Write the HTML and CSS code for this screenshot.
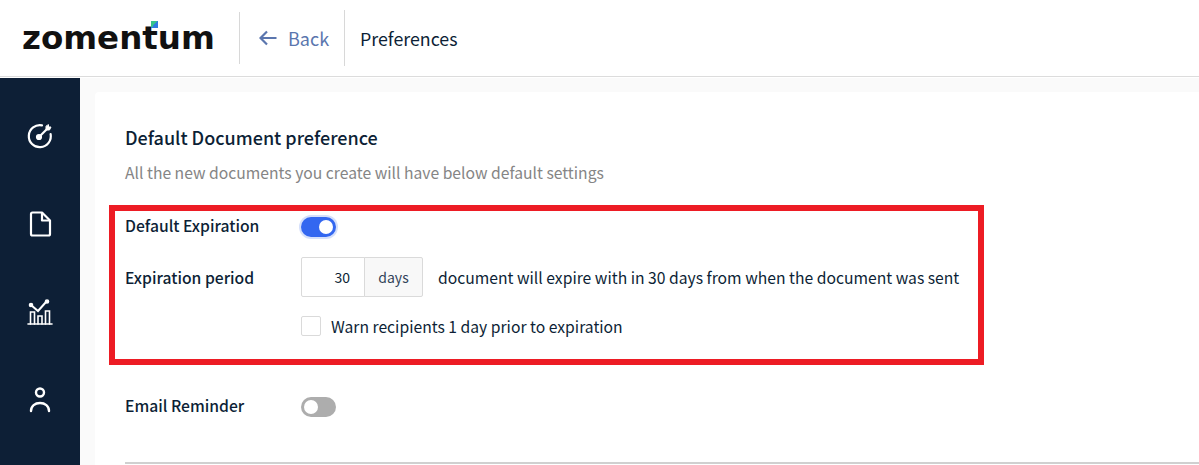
FILE: index.html
```html
<!DOCTYPE html>
<html lang="en">
<head>
    <meta charset="UTF-8">
    <meta name="viewport" content="width=device-width, initial-scale=1.0">
    <title>Preferences</title>
    <link rel="stylesheet" href="styles.css">
</head>
<body>
    <div class="header">
        <div class="logo">zomen<span class="logo-t">t<i class="logo-mark"></i></span>um</div>
        <div class="back">
            <svg width="18" height="16" viewBox="0 0 18 16"><path d="M8 1.500 1.500 8 8 14.500M2 8h15.500" fill="none" stroke="#5b76ae" stroke-width="2.200"/></svg>
            <span>Back</span>
        </div>
        <div class="page-title">Preferences</div>
    </div>

    <div class="main">
        <div class="sidebar">
            <svg class="nav-icon" viewBox="0 0 28 28" fill="none" stroke="#fff" stroke-width="2.200" stroke-linecap="round" stroke-linejoin="round">
                <path d="M16 3.400A11 11 0 1 0 24.600 12"/>
                <path d="M13 15 21 7"/>
                <circle cx="13" cy="15" r="2" fill="#fff"/>
                <path d="M20 4.500v3.500h3.500l1.500-3h-2.500v-2z" fill="#fff" stroke-width="1"/>
            </svg>
            <svg class="nav-icon" viewBox="0 0 28 28" fill="none" stroke="#fff" stroke-width="2.200" stroke-linejoin="round">
                <path d="M6.500 2.500H16L24 10.500V24a1.500 1.500 0 0 1-1.500 1.500h-16A1.500 1.500 0 0 1 5 24V4a1.500 1.500 0 0 1 1.500-1.500z"/>
                <path d="M16 2.500v8h8"/>
            </svg>
            <svg class="nav-icon" viewBox="0 0 28 28" fill="none" stroke="#fff" stroke-width="1.600" stroke-linecap="round">
                <path d="M2 26h24"/>
                <path d="M4.500 26V14h4v12M12 26v-8h4v8M19.500 26V13h4v13"/>
                <path d="M5 7l7 6 8-9" stroke-width="2"/>
                <circle cx="5" cy="7" r="1.500" fill="#fff"/>
                <circle cx="21" cy="3.500" r="1.500" fill="#fff"/>
            </svg>
            <svg class="nav-icon" viewBox="0 0 28 28" fill="none" stroke="#fff" stroke-width="2.400" stroke-linecap="round">
                <circle cx="14" cy="6.500" r="4"/>
                <path d="M5 25c0-5 4-8 9-8s9 3 9 8"/>
            </svg>
        </div>

        <div class="content">
            <div class="card">
                <h2 class="title">Default Document preference</h2>
                <p class="subtitle">All the new documents you create will have below default settings</p>

                <div class="row row-expiration">
                    <div class="label">Default Expiration</div>
                    <div class="switch switch-on"><span class="knob"></span></div>
                </div>

                <div class="row row-period">
                    <div class="label">Expiration period</div>
                    <div class="period-input">
                        <div class="period-value">30</div>
                        <div class="period-unit">days</div>
                    </div>
                    <div class="period-note">document will expire with in 30 days from when the document was sent</div>
                </div>

                <div class="row row-warn">
                    <div class="label"></div>
                    <div class="checkbox"></div>
                    <div class="warn-text">Warn recipients 1 day prior to expiration</div>
                </div>

                <div class="row row-reminder">
                    <div class="label">Email Reminder</div>
                    <div class="switch"><span class="knob"></span></div>
                </div>

                <div class="divider"></div>

                <div class="highlight"></div>
            </div>
        </div>
    </div>
</body>
</html>
```

FILE: styles.css
```css
* {
    box-sizing: border-box;
}

html, body {
    height: 100%;
}

body {
    margin: 0;
    font-family: "Noto Sans CJK SC", "Noto Sans", sans-serif;
    color: #0d1f36;
    background-color: white;
    overflow: hidden;
}

.header {
    display: flex;
    align-items: center;
    height: 77px;
    border-bottom: 1px solid #dcdcdc;
    background-color: white;
}

.logo {
    width: 239px;
    padding-left: 22px;
    font-family: "DejaVu Sans", sans-serif;
    font-size: 32.500px;
    font-weight: 700;
    color: #111;
    line-height: 1;
}

.logo-t {
    position: relative;
}

.logo-mark {
    position: absolute;
    top: 2px;
    right: 0;
    width: 7px;
    height: 7px;
    background: linear-gradient(135deg, #35c48b 50%, #2f7ce0 50%);
}

.back {
    display: flex;
    align-items: center;
    gap: 11px;
    width: 105px;
    height: 52px;
    padding-left: 19px;
    border-left: 1px solid #d8d8d8;
    color: #5b76ae;
    font-size: 18px;
}

.page-title {
    display: flex;
    align-items: center;
    height: 56px;
    padding-left: 15px;
    border-left: 1px solid #d8d8d8;
    font-size: 17.800px;
}

.main {
    display: flex;
    height: 388px;
    padding-top: 1px;
    background-color: white;
}

.sidebar {
    display: flex;
    flex-direction: column;
    align-items: center;
    gap: 60px;
    flex-shrink: 0;
    width: 80px;
    padding-top: 44px;
    background-color: #0d1f36;
}

.nav-icon {
    width: 28px;
    height: 28px;
}

.content {
    flex: 1;
    padding: 14px 0 0 15px;
    background-color: #fafafa;
}

.card {
    position: relative;
    height: 100%;
    padding: 33px 0 0 30px;
    background-color: white;
    border-radius: 4px 0 0 0;
}

.title {
    margin: 0;
    font-size: 18px;
    font-weight: 500;
    line-height: 24px;
}

.subtitle {
    margin: 12px 0 0;
    font-size: 15.700px;
    line-height: 24px;
    color: #858585;
}

.row {
    display: flex;
    align-items: center;
}

.label {
    width: 176px;
    flex-shrink: 0;
    font-size: 15.700px;
    font-weight: 500;
}

.row-expiration {
    margin-top: 28px;
    height: 24px;
}

.row-period {
    margin-top: 20px;
    height: 40px;
}

.row-warn {
    margin-top: 19px;
    height: 20px;
}

.row-reminder {
    margin-top: 57px;
    height: 24px;
}

.switch {
    position: relative;
    width: 35px;
    height: 20px;
    margin-top: 4px;
    border-radius: 10px;
    background-color: #adadad;
}

.switch-on {
    background-color: #3367f0;
    box-shadow: 0 0 0 2px #d5e0fb;
}

.knob {
    position: absolute;
    top: 3px;
    left: 3px;
    width: 14px;
    height: 14px;
    border-radius: 50%;
    background-color: white;
}

.switch-on .knob {
    left: 18px;
}

.period-input {
    display: flex;
    height: 40px;
    font-size: 14px;
}

.period-value {
    width: 64px;
    padding-right: 14px;
    line-height: 38px;
    text-align: right;
    border: 1px solid #dadada;
    border-radius: 2px 0 0 2px;
}

.period-unit {
    width: 59px;
    margin-left: -1px;
    line-height: 38px;
    text-align: center;
    color: #33445a;
    background-color: #f8f8f8;
    border: 1px solid #dadada;
    border-radius: 0 2px 2px 0;
}

.period-note {
    margin-left: 15px;
    font-size: 15.700px;
}

.checkbox {
    width: 20px;
    height: 20px;
    border: 1px solid #dadada;
    border-radius: 2px;
}

.warn-text {
    margin-left: 10px;
    font-size: 15.700px;
}

.divider {
    height: 2px;
    margin-top: 45px;
    background-color: #d0d0d0;
}

/* red annotation frame over the form */
.highlight {
    position: absolute;
    top: 113px;
    left: 14px;
    width: 875px;
    height: 160px;
    border: 6px solid #ed1c24;
}
```
